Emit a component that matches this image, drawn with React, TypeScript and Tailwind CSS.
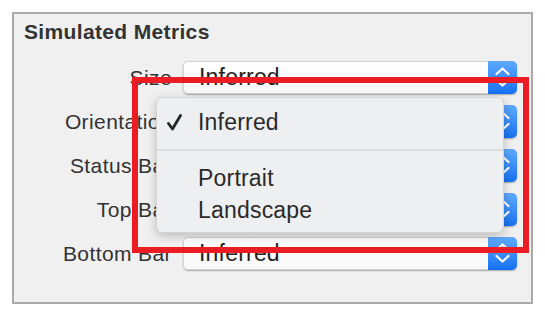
import React from "react";

const rows = ["Size", "Orientation", "Status Bar", "Top Bar", "Bottom Bar"];

function Stepper() {
  return (
    <div className="w-[29px] h-full shrink-0 rounded-r-[5px] bg-gradient-to-b from-[#5eaafc] to-[#1470f0] flex items-center justify-center">
      <svg width="29" height="33" viewBox="0 0 29 33" fill="none">
        <path d="M8.5 13 L14.5 7.5 L20.5 13" stroke="white" strokeWidth="2.2" strokeLinecap="round" strokeLinejoin="round" />
        <path d="M8.5 19 L14.5 24.5 L20.5 19" stroke="white" strokeWidth="2.2" strokeLinecap="round" strokeLinejoin="round" />
      </svg>
    </div>
  );
}

function PopupButton({ value }: { value: string }) {
  return (
    <div className="w-[334px] h-[33px] flex rounded-[5px] shadow-[0_1px_1.5px_rgba(0,0,0,0.3)]">
      <div className="flex-1 flex items-center pl-[15px] rounded-l-[5px] border border-r-0 border-[#d2d2d2] bg-gradient-to-b from-white to-[#f8f8f8] text-[23px] tracking-[0.2px] text-[#222222]">
        {value}
      </div>
      <Stepper />
    </div>
  );
}

function Check() {
  return (
    <svg width="15" height="17" viewBox="0 0 15 17" fill="none">
      <path d="M1.5 9.5 L5.5 15 L13.5 1.5" stroke="#262626" strokeWidth="2.8" strokeLinecap="round" strokeLinejoin="round" />
    </svg>
  );
}

export default function App() {
  return (
    <div
      className="relative w-[545px] h-[316px] bg-white overflow-hidden pt-[12px] pl-[12px]"
      style={{ fontFamily: '"Liberation Sans", Arial, sans-serif' }}
    >
      <div className="w-[521px] h-[292px] border-2 border-[#aaaaaa] bg-[#f0f0f0] pt-[6px]">
        <div className="pl-[10px] h-[24px] leading-[24px] text-[21px] font-bold tracking-[0.35px] text-[#333333]">
          Simulated Metrics
        </div>
        <div className="mt-[17px] flex flex-col gap-[11px]">
          {rows.map((label) => (
            <div key={label} className="flex items-center h-[33px]">
              <div className="w-[158px] text-right text-[21px] tracking-[0.4px] text-[#333333]">
                {label}
              </div>
              <div className="ml-[11px]">
                <PopupButton value="Inferred" />
              </div>
            </div>
          ))}
        </div>
      </div>

      {/* open menu */}
      <div className="absolute left-[156px] top-[97px] w-[348px] h-[136px] rounded-[6px] bg-[#eeeff0] border border-[#d4d4d4] shadow-[0_3px_10px_rgba(0,0,0,0.22)] pt-[8px] text-[23px] tracking-[0.2px] text-[#2a2a2a]">
        <div className="h-[32px] leading-[32px] flex items-center">
          <div className="w-[41px] pl-[10px] flex items-center">
            <Check />
          </div>
          <span>Inferred</span>
        </div>
        <div className="mt-[11px] h-[2px] bg-[#dcdddd]" />
        <div className="mt-[11px] h-[32px] leading-[32px] pl-[41px]">Portrait</div>
        <div className="h-[32px] leading-[32px] pl-[41px]">Landscape</div>
      </div>

      {/* highlight */}
      <div className="absolute left-[132px] top-[77px] w-[397px] h-[176px] border-[6px] border-[#ec1c24]" />
    </div>
  );
}
